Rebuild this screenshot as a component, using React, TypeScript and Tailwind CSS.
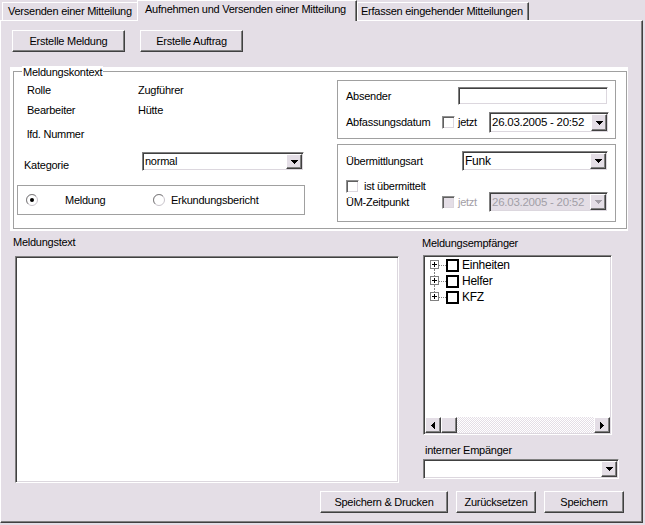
import React from 'react';

type Kids = { children?: React.ReactNode; className?: string };

// classic 3d raised face (buttons, scroll arrows)
function Raised({ children, className = '' }: Kids) {
  return (
    <div
      className={`box-border border border-t-white border-l-white border-r-[#404040] border-b-[#404040] bg-[#e4dee6] shadow-[inset_-1px_-1px_#808080] ${className}`}
    >
      {children}
    </div>
  );
}

function Btn({ children, className = '' }: Kids) {
  return <Raised className={`flex items-center justify-center whitespace-nowrap ${className}`}>{children}</Raised>;
}

function Sunken({ children, className = '' }: Kids) {
  return (
    <div
      className={`box-border border border-t-[#808080] border-l-[#808080] border-r-white border-b-white p-[1px] shadow-[inset_1px_1px_#404040,inset_-1px_-1px_#dcd7de] ${className}`}
    >
      {children}
    </div>
  );
}

function DownArrow({ disabled = false }: { disabled?: boolean }) {
  return (
    <svg width="7" height="4" viewBox="0 0 7 4" shapeRendering="crispEdges">
      <path d="M0 0h7v1H0zM1 1h5v1H1zM2 2h3v1H2zM3 3h1v1H3z" fill={disabled ? '#a29ea6' : '#000'} />
    </svg>
  );
}

function Combo({ value, className = '', disabled = false }: { value: string; className?: string; disabled?: boolean }) {
  return (
    <Sunken className={`flex ${disabled ? 'bg-[#e4dee6] text-[#a29ea6]' : 'bg-white'} ${className}`}>
      <div className="flex flex-1 items-center whitespace-nowrap pl-[1px]">{value}</div>
      <Raised className="flex w-[16px] items-center justify-center">
        <DownArrow disabled={disabled} />
      </Raised>
    </Sunken>
  );
}

function Check({ disabled = false, className = '' }: { disabled?: boolean; className?: string }) {
  return (
    <div
      className={`box-border h-[13px] w-[13px] shrink-0 border border-t-[#909090] border-l-[#909090] border-r-white border-b-white shadow-[inset_1px_1px_#606060,inset_-1px_-1px_#dcd7de] ${disabled ? 'bg-[#e4dee6]' : 'bg-white'} ${className}`}
    />
  );
}

function Radio({ checked = false }: { checked?: boolean }) {
  return (
    <svg width="12" height="12" viewBox="0 0 12 12" className="shrink-0">
      <circle cx="6" cy="6" r="5.5" fill="#fff" stroke="#c8c3ca" />
      <path d="M2.1 9.9A5.5 5.5 0 0 1 9.9 2.1" stroke="#808080" fill="none" />
      {checked && <circle cx="6" cy="6" r="2" fill="#000" />}
    </svg>
  );
}

function TreeRow({ label, first = false, last = false }: { label: string; first?: boolean; last?: boolean }) {
  return (
    <div className="flex h-[16px] items-center">
      <div className="flex h-[16px] w-[9px] flex-col items-center">
        <div className={`h-[3px] ${first ? '' : 'border-l border-dotted border-[#808080]'}`} />
        <div className="box-border flex h-[9px] w-[9px] items-center justify-center border border-[#808080] bg-white">
          <svg width="5" height="5" viewBox="0 0 5 5" shapeRendering="crispEdges">
            <path d="M0 2h5v1H0zM2 0h1v5H2z" fill="#000" />
          </svg>
        </div>
        <div className={`flex-1 ${last ? '' : 'border-l border-dotted border-[#808080]'}`} />
      </div>
      <div className="w-[7px] border-t border-dotted border-[#808080]" />
      <div className="box-border h-[13px] w-[13px] border-2 border-black bg-white" />
      <span className="ml-[3px] text-[12px]">{label}</span>
    </div>
  );
}

function Tree() {
  return (
    <Sunken className="ml-[1px] mt-[5px] flex h-[180px] w-[189px] flex-col bg-white">
      <div className="flex-1 pl-[5px]">
        <TreeRow label="Einheiten" first />
        <TreeRow label="Helfer" />
        <TreeRow label="KFZ" last />
      </div>
      <div className="flex h-[16px]">
        <Raised className="flex w-[16px] items-center justify-center">
          <svg width="4" height="7" viewBox="0 0 4 7" shapeRendering="crispEdges">
            <path d="M3 0h1v7H3zM2 1h1v5H2zM1 2h1v3H1zM0 3h1v1H0z" fill="#000" />
          </svg>
        </Raised>
        <Raised className="w-[16px]" />
        <div className="flex-1 bg-[repeating-conic-gradient(#e4dee6_0%_25%,#ffffff_0%_50%)] bg-[length:2px_2px]" />
        <Raised className="flex w-[16px] items-center justify-center">
          <svg width="4" height="7" viewBox="0 0 4 7" shapeRendering="crispEdges">
            <path d="M0 0h1v7H0zM1 1h1v5H1zM2 2h1v3H2zM3 3h1v1H3z" fill="#000" />
          </svg>
        </Raised>
      </div>
    </Sunken>
  );
}

export default function App() {
  return (
    <div className="h-[525px] w-[645px] overflow-hidden bg-[#e4dee6] font-['Liberation_Sans',Arial,sans-serif] text-[11px] leading-[13px] tracking-[-0.25px] text-black">
      {/* tabs */}
      <div className="flex h-[20px] items-end whitespace-nowrap pl-[2px]">
        <div className="box-border flex h-[18px] w-[135px] items-center border-l border-t border-white pb-[1px] pl-[5px]">
          Versenden einer Mitteilung
        </div>
        <div className="relative z-10 -mb-[1px] box-border flex h-[21px] w-[220px] items-center border-l border-r border-t border-white border-r-[#404040] bg-[#e4dee6] pb-[3px] pl-[7px] shadow-[inset_-1px_0_#808080]">
          Aufnehmen und Versenden einer Mitteilung
        </div>
        <div className="box-border flex h-[18px] w-[172px] items-center border-l border-r border-t border-white border-r-[#404040] pb-[1px] pl-[3px] shadow-[inset_-1px_0_#808080]">
          Erfassen eingehender Mitteilungen
        </div>
      </div>

      {/* tab page */}
      <div className="box-border h-[503px] w-[643px] border border-t-white border-l-white border-r-[#404040] border-b-[#404040] shadow-[inset_-1px_-1px_#808080]">
        <div className="ml-[11px] mt-[9px] flex gap-[15px]">
          <Btn className="h-[22px] w-[113px]">Erstelle Meldung</Btn>
          <Btn className="h-[22px] w-[103px]">Erstelle Auftrag</Btn>
        </div>

        <div className="ml-[9px] mt-[15px] h-[164px] w-[618px] bg-white pl-[3px] pt-[4px]">
          <div className="relative box-border flex h-[158px] w-[614px] border border-[#a0a0a0]">
            <span className="absolute -top-[6px] left-[8px] bg-white px-[1px]">Meldungskontext</span>

            <div className="flex w-[291px] flex-col">
              <div className="mt-[8px] flex h-[20px] items-center pl-[13px]">
                <span className="w-[111px]">Rolle</span>
                <span>Zugführer</span>
              </div>
              <div className="flex h-[20px] items-center pl-[13px]">
                <span className="w-[111px]">Bearbeiter</span>
                <span>Hütte</span>
              </div>
              <div className="mt-[4px] flex h-[20px] items-center pl-[13px]">lfd. Nummer</div>
              <div className="mt-[8px] flex pl-[10px]">
                <span className="w-[118px] pt-[7px]">Kategorie</span>
                <Combo value="normal" className="h-[19px] w-[162px]" />
              </div>
              <div className="ml-[3px] mt-[13px] box-border flex h-[30px] w-[288px] items-center border border-[#a0a0a0] pl-[8px]">
                <Radio checked />
                <span className="ml-[27px] w-[88px]">Meldung</span>
                <Radio />
                <span className="ml-[6px]">Erkundungsbericht</span>
              </div>
            </div>

            <div className="ml-[32px] flex flex-col pt-[8px]">
              <div className="box-border h-[59px] w-[279px] border border-[#a0a0a0]">
                <div className="mt-[6px] flex h-[18px] items-center pl-[8px]">
                  <span className="w-[112px]">Absender</span>
                  <Sunken className="h-[18px] w-[150px] bg-white" />
                </div>
                <div className="mt-[7px] flex h-[21px] items-center pl-[8px]">
                  <span className="w-[96px]">Abfassungsdatum</span>
                  <Check />
                  <span className="ml-[3px] w-[31px]">jetzt</span>
                  <Combo value="26.03.2005 - 20:52" className="h-[21px] w-[120px] text-[11.5px]" />
                </div>
              </div>
              <div className="mt-[5px] box-border h-[78px] w-[279px] border border-[#a0a0a0]">
                <div className="mt-[6px] flex h-[20px] items-center pl-[8px]">
                  <span className="w-[116px]">Übermittlungsart</span>
                  <Combo value="Funk" className="h-[20px] w-[146px] text-[12px]" />
                </div>
                <div className="mt-[9px] flex h-[13px] items-center pl-[8px]">
                  <Check />
                  <span className="ml-[5px]">ist übermittelt</span>
                </div>
                <div className="-mt-[1px] flex h-[20px] items-center pl-[8px]">
                  <span className="w-[96px]">ÜM-Zeitpunkt</span>
                  <Check disabled />
                  <span className="ml-[3px] w-[31px] text-[#a29ea6]">jetzt</span>
                  <Combo value="26.03.2005 - 20:52" className="h-[20px] w-[119px] text-[11.5px]" disabled />
                </div>
              </div>
            </div>
          </div>
        </div>

        <div className="flex">
          <div className="ml-[12px] w-[386px] pt-[5px]">
            <div>Meldungstext</div>
            <Sunken className="ml-[2px] mt-[7px] h-[227px] w-[384px] bg-white" />
          </div>
          <div className="ml-[23px] pt-[6px]">
            <div>Meldungsempfänger</div>
            <Tree />
            <div className="ml-[3px] mt-[9px]">interner Empänger</div>
            <Combo value="" className="ml-[1px] mt-[2px] h-[20px] w-[196px]" />
          </div>
        </div>

        <div className="mt-[8px] flex justify-end gap-[8px] pr-[18px]">
          <Btn className="h-[22px] w-[128px]">Speichern &amp; Drucken</Btn>
          <Btn className="h-[22px] w-[80px]">Zurücksetzen</Btn>
          <Btn className="h-[22px] w-[80px]">Speichern</Btn>
        </div>
      </div>
    </div>
  );
}
